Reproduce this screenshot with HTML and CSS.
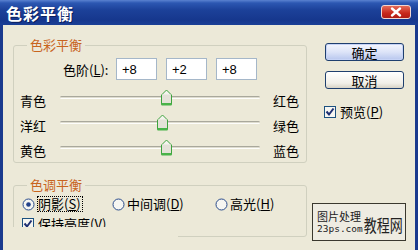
FILE: index.html
```html
<!DOCTYPE html>
<html>

<head>
  <meta http-equiv="Content-Type" content="text/html; charset=UTF-8">
  <title>色彩平衡</title>
  <link rel="stylesheet" href="styles.css">
</head>

<body>

  <div class="window">

    <div class="titlebar">
      <span class="title">色彩平衡</span>
      <span class="close">
        <svg width="30" height="14" viewBox="0 0 30 14">
          <path d="M11 3.5 L19 10.5 M19 3.5 L11 10.5" stroke="#fff" stroke-width="2.4" stroke-linecap="round" />
        </svg>
      </span>
    </div>

    <div class="body">

      <div class="main">

        <fieldset class="group group-color">
          <legend>色彩平衡</legend>

          <div class="levels">
            <span class="levels-label">色阶(<u>L</u>):</span>
            <input type="text" class="level" value="+8" size="4">
            <input type="text" class="level" value="+2" size="4">
            <input type="text" class="level" value="+8" size="4">
          </div>

          <div class="slider-row">
            <span class="lbl">青色</span>
            <div class="track">
              <span class="thumb" style="left: 100px;">
                <svg width="13" height="17" viewBox="0 0 13 17">
                  <path d="M1.5 15.5 V6 L6.5 1 L11.5 6 V15.5 Z" fill="#f4f4ee" stroke="#3ea33e" />
                  <rect x="2" y="5.5" width="9" height="9" fill="#e4e2d8" />
                  <rect x="1.5" y="14" width="10" height="2.5" fill="#49b349" />
                </svg>
              </span>
            </div>
            <span class="lbl lbl-right">红色</span>
          </div>

          <div class="slider-row">
            <span class="lbl">洋红</span>
            <div class="track">
              <span class="thumb" style="left: 96px;">
                <svg width="13" height="17" viewBox="0 0 13 17">
                  <path d="M1.5 15.5 V6 L6.5 1 L11.5 6 V15.5 Z" fill="#f4f4ee" stroke="#3ea33e" />
                  <rect x="2" y="5.5" width="9" height="9" fill="#e4e2d8" />
                  <rect x="1.5" y="14" width="10" height="2.5" fill="#49b349" />
                </svg>
              </span>
            </div>
            <span class="lbl lbl-right">绿色</span>
          </div>

          <div class="slider-row">
            <span class="lbl">黄色</span>
            <div class="track">
              <span class="thumb" style="left: 100px;">
                <svg width="13" height="17" viewBox="0 0 13 17">
                  <path d="M1.5 15.5 V6 L6.5 1 L11.5 6 V15.5 Z" fill="#f4f4ee" stroke="#3ea33e" />
                  <rect x="2" y="5.5" width="9" height="9" fill="#e4e2d8" />
                  <rect x="1.5" y="14" width="10" height="2.5" fill="#49b349" />
                </svg>
              </span>
            </div>
            <span class="lbl lbl-right">蓝色</span>
          </div>
        </fieldset>

        <fieldset class="group group-tone">
          <legend>色调平衡</legend>

          <div class="radios">
            <span class="radio radio-first">
              <svg width="13" height="13" viewBox="0 0 13 13">
                <circle cx="6.5" cy="6.5" r="5.5" fill="#f6f6f2" stroke="#2a4c8c" />
                <circle cx="6.5" cy="6.5" r="2.3" fill="#23428a" />
              </svg>
              <span class="focus">阴影(<u>S</u>)</span>
            </span>
            <span class="radio radio-second">
              <svg width="13" height="13" viewBox="0 0 13 13">
                <circle cx="6.5" cy="6.5" r="5.5" fill="#f6f6f2" stroke="#2a4c8c" />
              </svg>
              <span>中间调(<u>D</u>)</span>
            </span>
            <span class="radio">
              <svg width="13" height="13" viewBox="0 0 13 13">
                <circle cx="6.5" cy="6.5" r="5.5" fill="#f6f6f2" stroke="#2a4c8c" />
              </svg>
              <span>高光(<u>H</u>)</span>
            </span>
          </div>

          <div class="check-row">
            <svg width="12" height="12" viewBox="0 0 12 12">
              <rect x="0.5" y="0.5" width="11" height="11" fill="#f6f6f2" stroke="#1c5180" />
              <path d="M2.5 5.5 L5 8.5 L9.5 2.5" fill="none" stroke="#1e2f72" stroke-width="2" />
            </svg>
            <span>保持亮度(<u>V</u>)</span>
          </div>
        </fieldset>

      </div>

      <div class="side">
        <button class="btn btn-default">确定</button>
        <button class="btn btn-cancel">取消</button>
        <label class="preview">
          <svg width="12" height="12" viewBox="0 0 12 12">
            <rect x="0.5" y="0.5" width="11" height="11" fill="#f6f6f2" stroke="#1c5180" />
            <path d="M2.5 5.5 L5 8.5 L9.5 2.5" fill="none" stroke="#1e2f72" stroke-width="2" />
          </svg>
          <span>预览(<u>P</u>)</span>
        </label>
      </div>

    </div>

    <!-- the screenshot was cut here -->
    <div class="cover"></div>

    <div class="watermark">
      <div class="wm-left">
        <span class="wm-cn">图片处理</span>
        <span class="wm-url">23ps.com</span>
      </div>
      <span class="wm-big">教程网</span>
    </div>

  </div>

</body>

</html>
```

FILE: styles.css
```css
* {
  box-sizing: border-box;
}

body {
  margin: 0;
  font-family: "Noto Sans CJK SC", sans-serif;
  font-size: 13px;
  color: #000;
}

.window {
  width: 418px;
  height: 250px;
  position: relative;
  overflow: hidden;
  background: #ece9d8;
  display: flex;
  flex-direction: column;
}

.titlebar {
  height: 25px;
  flex: none;
  display: flex;
  align-items: center;
  justify-content: space-between;
  padding: 0 7px 0 6px;
  background: linear-gradient(to bottom, #5a82d0 0, #2c57b2 3px, #1c4199 40%, #16378d 80%, #1a3f96 100%);
}

.title {
  color: #fff;
  font-weight: bold;
  font-size: 16px;
  line-height: 18px;
  letter-spacing: 1px;
  text-shadow: 1px 1px 0 #0b1f5e;
}

.close {
  width: 30px;
  height: 14px;
  margin-top: -2px;
  border-radius: 3px;
  border: 1px solid #f2d6d0;
  background: linear-gradient(to bottom, #e46a58, #c8281c 60%, #b01c14);
  display: flex;
}

.close svg {
  margin: -1px;
}

.body {
  flex: 1;
  display: flex;
  border-left: 3px solid #1a3a8e;
  border-right: 3px solid #1a3a8e;
  padding: 13px 0 0 10px;
}

.main {
  width: 294px;
  flex: none;
}

.group {
  margin: 0;
  padding: 6px 0 2px 0;
  border: 1px solid #d0d0bf;
  border-radius: 3px;
  min-width: 0;
}

.group legend {
  margin-left: 13px;
  padding: 0 3px;
  color: #c8641e;
  font-size: 13px;
  line-height: 14px;
}

.levels {
  display: flex;
  align-items: center;
  height: 22px;
  padding-left: 49px;
}

.levels-label {
  width: 53px;
}

.level {
  width: 41px;
  height: 22px;
  margin: 0 9px 0 0;
  border: 1px solid #a5b7c9;
  padding: 0 5px;
  font-family: "Liberation Sans", sans-serif;
  font-size: 13px;
  background: #fff;
}

.slider-row {
  display: flex;
  align-items: center;
  height: 25px;
  padding-left: 6px;
}

.levels + .slider-row {
  margin-top: 5px;
}

.lbl {
  width: 40px;
  padding-top: 6px;
}

.lbl-right {
  width: auto;
  margin-left: 13px;
}

.track {
  width: 200px;
  height: 3px;
  position: relative;
  border-top: 1px solid #a9a89c;
  border-bottom: 1px solid #fdfdfb;
  border-radius: 2px;
  background: #dedccf;
}

.thumb {
  position: absolute;
  top: -8px;
  width: 13px;
  height: 17px;
  display: block;
}

.thumb svg {
  display: block;
}

.group-tone {
  margin-top: 15px;
  padding: 4px 0 6px 0;
}

.radios {
  display: flex;
  align-items: center;
  height: 16px;
  padding-left: 8px;
}

.radio {
  display: flex;
  align-items: center;
  line-height: 14px;
}

.radio svg {
  margin-right: 2px;
  flex: none;
}

.radio-first {
  width: 90px;
}

.radio-second {
  width: 103px;
}

.focus {
  border: 1px dotted #000;
  padding: 0 1px 0 0;
}

.check-row {
  display: flex;
  align-items: center;
  height: 13px;
  margin-top: 5px;
  padding-left: 8px;
}

.check-row svg,
.preview svg {
  margin-right: 4px;
  flex: none;
}

.side {
  margin-left: 18px;
  padding-top: 5px;
  display: flex;
  flex-direction: column;
  align-items: flex-start;
}

.btn {
  width: 79px;
  height: 18px;
  padding: 0;
  border: 1px solid #1f3f6e;
  border-radius: 3px;
  font-family: "Noto Sans CJK SC", sans-serif;
  font-size: 13px;
  line-height: 15px;
  color: #000;
  background: linear-gradient(to bottom, #ffffff, #f1efe8 70%, #d8d3c6);
}

.btn-default {
  background: linear-gradient(to bottom, #f4f6fe, #dde4f8 50%, #b7c6ee);
  box-shadow: inset 0 0 0 1px #c6d3f6;
}

.btn-cancel {
  margin-top: 10px;
}

.preview {
  display: flex;
  align-items: center;
  height: 13px;
  margin-top: 16px;
  margin-left: -1px;
}

.cover {
  position: absolute;
  left: 3px;
  top: 227px;
  width: 175px;
  height: 23px;
  background: #ece9d8;
}

.watermark {
  position: absolute;
  left: 312px;
  top: 203px;
  width: 94px;
  height: 38px;
  border: 1px solid #3a382e;
  background: #eeece2;
  display: flex;
  align-items: flex-end;
  padding: 0 2px 5px 4px;
}

.wm-left {
  display: flex;
  flex-direction: column;
}

.wm-cn {
  font-size: 11px;
  line-height: 14px;
  color: #222;
}

.wm-url {
  font-family: "DejaVu Sans Mono", monospace;
  font-size: 9.5px;
  line-height: 12px;
  color: #222;
}

.wm-big {
  font-size: 13px;
  line-height: 16px;
  color: #222;
  margin-left: 1px;
  transform: scaleY(1.35);
  transform-origin: 50% 80%;
}
```
